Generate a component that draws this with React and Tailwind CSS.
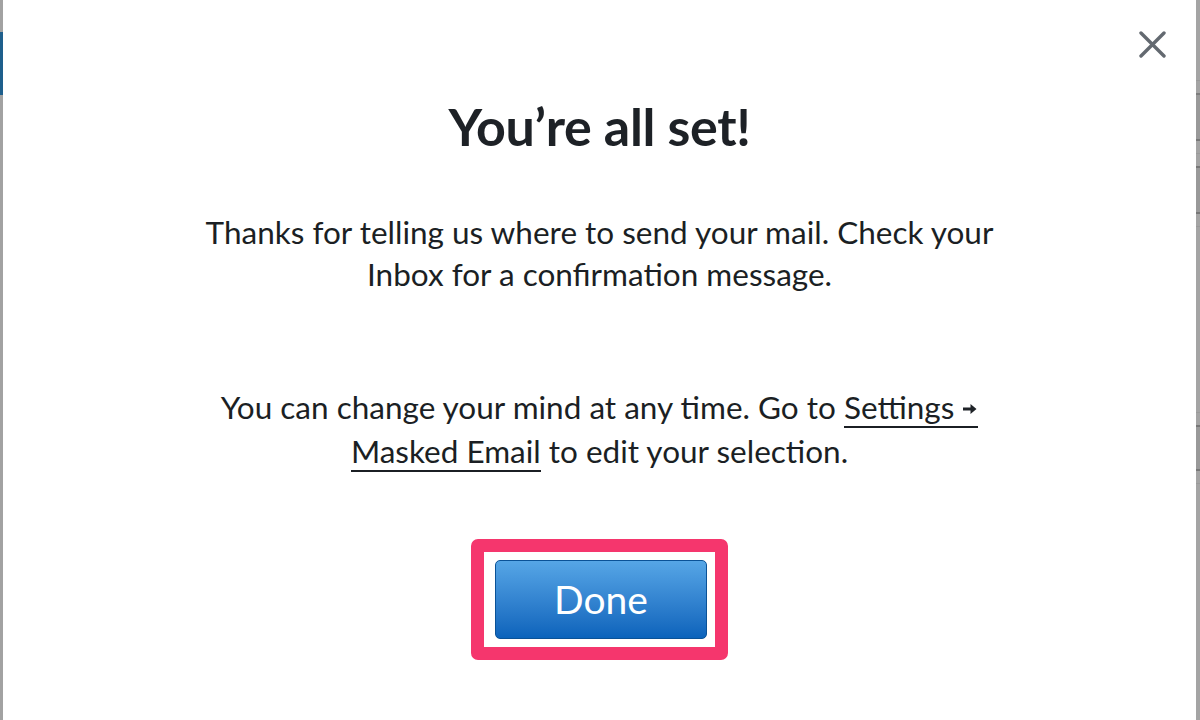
const font = { fontFamily: 'Lato, "Open Sans", sans-serif' };

function CloseIcon() {
  return (
    <svg width="27" height="27" viewBox="0 0 27 27" fill="none">
      <path d="M2 2l23 23M25 2L2 25" stroke="#636970" strokeWidth="3.4" strokeLinecap="round" />
    </svg>
  );
}

function ArrowGlyph() {
  return (
    <svg width="16" height="14" viewBox="0 0 16 14" className="inline-block align-middle ml-2 -mt-1">
      <path d="M1 5.5h7.5V2l6 5-6 5V8.5H1z" fill="#1f2328" />
    </svg>
  );
}

export default function App() {
  return (
    <div className="w-[1200px] h-[720px] flex bg-white overflow-hidden" style={font}>
      {/* page behind the dialog, left edge */}
      <div className="w-[3px] flex flex-col bg-[#a2a2a2]">
        <div className="h-[32px]" />
        <div className="h-[63px] bg-[#1e5f8c]" />
      </div>

      {/* Dialog */}
      <div className="relative flex-1 bg-white flex flex-col items-center text-[#1b1f24]">
        <button className="absolute top-[31px] right-[30px]">
          <CloseIcon />
        </button>

        <h1 className="mt-[96px] text-[52px] leading-[60px] font-bold tracking-[-0.3px] text-[#1d2126]">
          You’re all set!
        </h1>

        <p className="mt-[55px] text-center text-[31.5px] leading-[42px]">
          Thanks for telling us where to send your mail. Check your
          <br />
          Inbox for a confirmation message.
        </p>

        <p className="mt-[90px] text-center text-[31.5px] leading-[44px]">
          You can change your mind at any time. Go to{' '}
          <a className="border-b-2 border-[#1b1f24]">
            Settings<ArrowGlyph />
          </a>
          <br />
          <a className="border-b-2 border-[#1b1f24]">Masked Email</a> to edit your selection.
        </p>

        {/* highlighted Done button */}
        <div className="mt-[66px] rounded-[7px] border-[13px] border-[#f5366d] bg-white pt-[8px] pb-[8px] pl-[11px] pr-[8px]">
          <button className="w-[212px] h-[79px] rounded-[5px] border border-[#0a5297] bg-gradient-to-b from-[#56a6e6] to-[#0a63bb] text-white text-[39px] leading-none">
            Done
          </button>
        </div>
      </div>

      {/* page behind the dialog, right edge */}
      <div className="w-[4px] flex flex-col bg-[#a4a4a4]">
        <div className="h-[80px]" />
        <div className="h-[1px] bg-[#9a9a9a]" />
        <div className="h-[12px]" />
        <div className="h-[2px] bg-[#7d7d7d]" />
        <div className="h-[44px] bg-[#999]" />
        <div className="h-[2px] bg-[#777]" />
        <div className="h-[12px]" />
        <div className="h-[1px] bg-[#9a9a9a]" />
        <div className="h-[12px]" />
        <div className="h-[2px] bg-[#777]" />
        <div className="h-[44px] bg-[#999]" />
        <div className="h-[2px] bg-[#777]" />
        <div className="h-[12px]" />
        <div className="h-[1px] bg-[#9a9a9a]" />
        <div className="h-[185px]" />
        <div className="h-[1px] bg-[#9a9a9a]" />
        <div className="h-[12px]" />
        <div className="h-[2px] bg-[#777]" />
        <div className="h-[42px] bg-[#999]" />
        <div className="h-[2px] bg-[#777]" />
        <div className="h-[12px]" />
        <div className="h-[1px] bg-[#9a9a9a]" />
      </div>
    </div>
  );
}
